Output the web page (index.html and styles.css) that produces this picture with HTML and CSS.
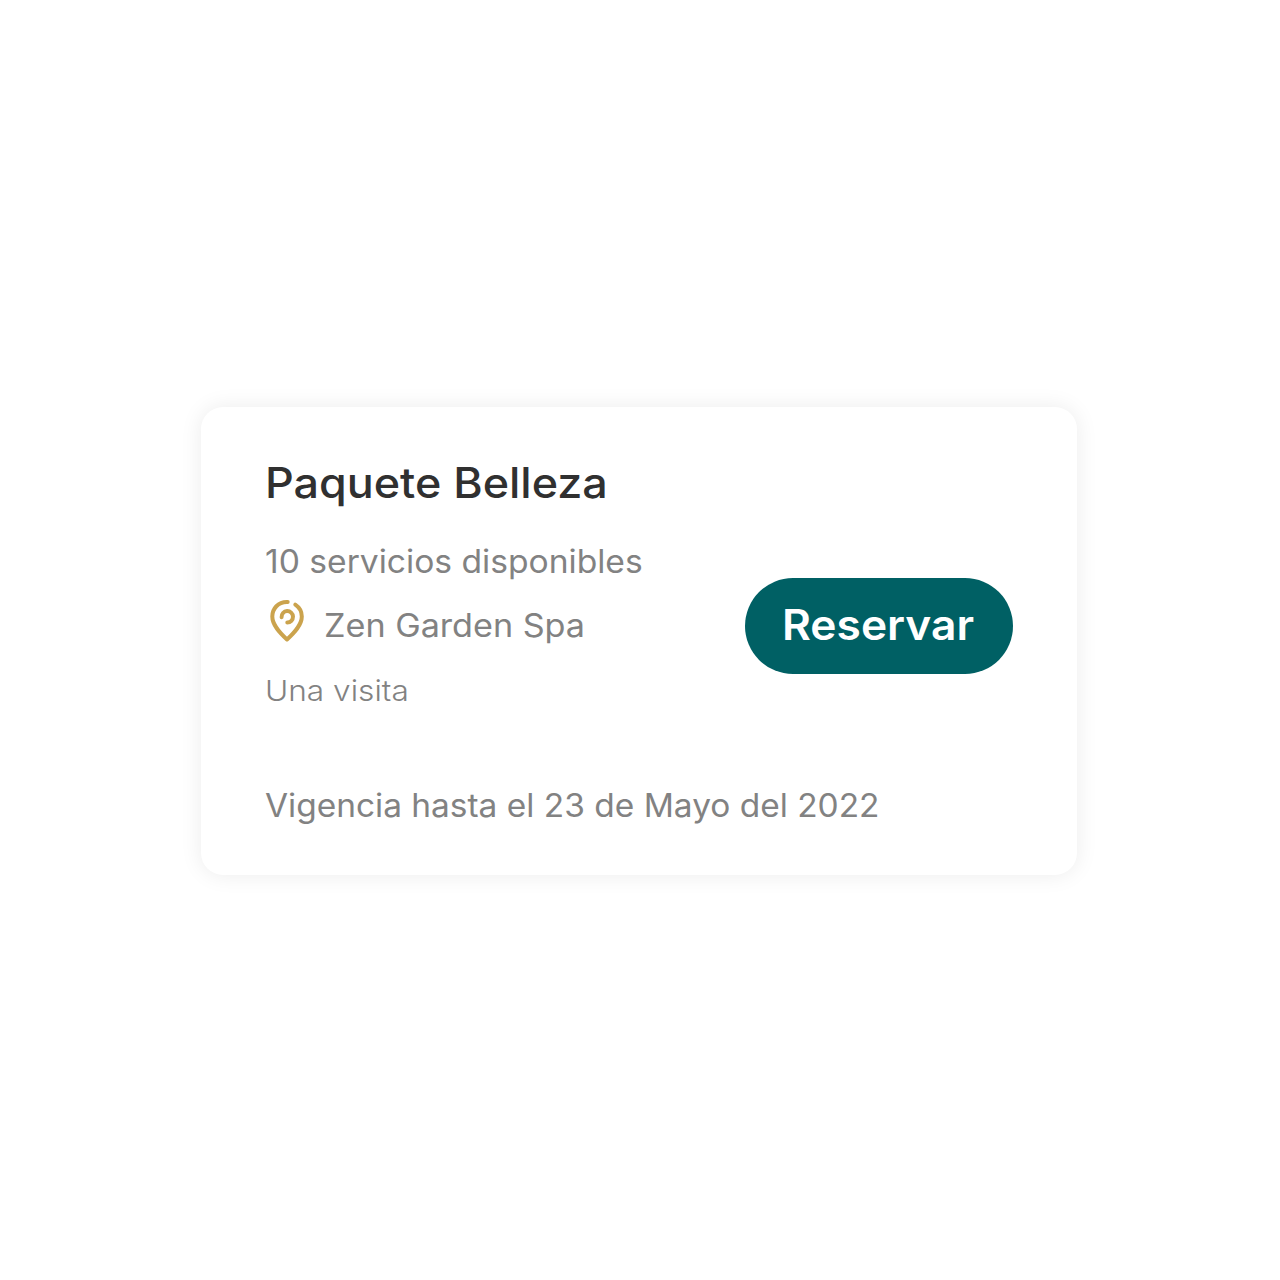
FILE: index.html
```html
<!DOCTYPE html>
<html lang="es">
<head>
<meta charset="utf-8">
<title>Paquete Belleza</title>
<link rel="stylesheet" href="styles.css">
</head>
<body>
<article class="card">
  <h1 class="title"><span>Paquete Belleza</span></h1>
  <div class="content">
    <div class="details">
      <p class="services"><span>10 servicios disponibles</span></p>
      <div class="place">
        <svg class="pin" viewBox="0 0 40 48" fill="none" stroke="currentColor" stroke-width="4" stroke-linecap="round" stroke-linejoin="round">
          <path d="M22.700 4C13 3.500 7.300 11 7.300 18.500C7.300 27 14.500 34.500 22 41.500C29.500 34.500 36.800 27 36.800 18.500C36.800 13.500 34.500 9.500 30.300 6.700"/>
          <path d="M16.600 19.200A5.700 5.700 0 1 1 22.300 24.500"/>
        </svg>
        <span class="spa">Zen Garden Spa</span>
      </div>
      <p class="visit"><span>Una visita</span></p>
    </div>
    <button class="reserve" type="button"><span>Reservar</span></button>
  </div>
  <p class="validity"><span>Vigencia hasta el 23 de Mayo del 2022</span></p>
</article>
</body>
</html>
```
FILE: styles.css
```css
* { box-sizing: border-box; }
body {
  margin: 0;
  min-height: 1280px;
  padding: 407px 203px 0 201px;
  background: #fff;
  color: #828282;
  font-family: "Inter", sans-serif;
  font-weight: 400;
}
h1, p { margin: 0; white-space: nowrap; }
/* Slightly extended letterforms */
.card span { display: inline-block; transform-origin: left center; }
.card {
  height: 468px;
  padding: 52px 64px 0;
  border-radius: 22px;
  background: #fff;
  box-shadow: 0 0 22px rgba(0, 0, 0, 0.08);
}
.title {
  color: #303030;
  font-size: 42px;
  line-height: 48px;
  font-weight: 500;
}
.title span { transform: scaleX(1.068); }
.content {
  display: flex;
  justify-content: space-between;
  padding-top: 35px;
}
.services, .place, .validity { font-size: 32px; line-height: 40px; }
.services span { transform: scaleX(1.05); }
.place {
  display: flex;
  align-items: center;
  height: 48px;
  margin-top: 16px;
}
.pin { width: 40px; height: 48px; margin-right: 19px; color: #cba34d; }
.place .spa { padding-top: 7px; transform: scaleX(1.067); }
.visit {
  margin-top: 27px;
  font-size: 29px;
  line-height: 36px;
  font-weight: 300;
}
.visit span { transform: scaleX(1.09); }
.reserve {
  width: 268px;
  height: 96px;
  margin-top: 36px;
  padding: 0 2px 2px 0;
  border: 0;
  border-radius: 48px;
  background: #006064;
  color: #fff;
  font: 600 42px/48px "Inter", sans-serif;
}
.reserve span { transform: scaleX(1.055); transform-origin: center; }
.validity { margin-top: 77px; }
.validity span { transform: scaleX(1.045); }
```
